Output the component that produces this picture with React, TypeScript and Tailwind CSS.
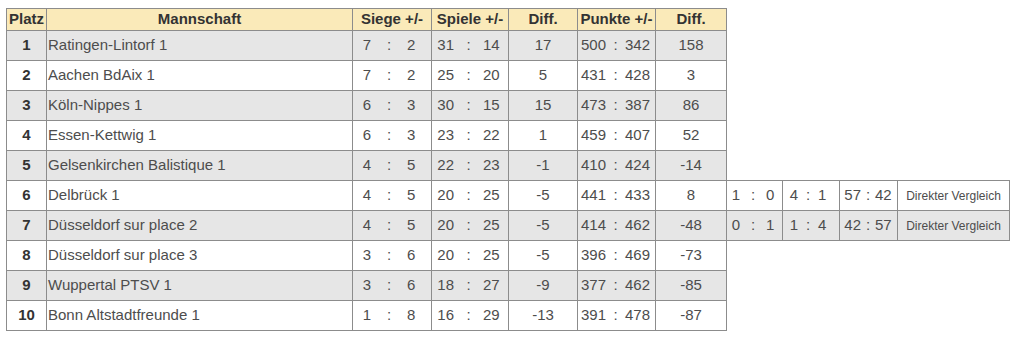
import React from "react";

type Pair = [number, number];

type Row = {
  platz: number;
  team: string;
  siege: Pair;
  spiele: Pair;
  diff: number;
  punkte: Pair;
  pdiff: number;
  extra?: [Pair, Pair, Pair];
};

const rows: Row[] = [
  { platz: 1, team: "Ratingen-Lintorf 1", siege: [7, 2], spiele: [31, 14], diff: 17, punkte: [500, 342], pdiff: 158 },
  { platz: 2, team: "Aachen BdAix 1", siege: [7, 2], spiele: [25, 20], diff: 5, punkte: [431, 428], pdiff: 3 },
  { platz: 3, team: "Köln-Nippes 1", siege: [6, 3], spiele: [30, 15], diff: 15, punkte: [473, 387], pdiff: 86 },
  { platz: 4, team: "Essen-Kettwig 1", siege: [6, 3], spiele: [23, 22], diff: 1, punkte: [459, 407], pdiff: 52 },
  { platz: 5, team: "Gelsenkirchen Balistique 1", siege: [4, 5], spiele: [22, 23], diff: -1, punkte: [410, 424], pdiff: -14 },
  {
    platz: 6, team: "Delbrück 1", siege: [4, 5], spiele: [20, 25], diff: -5, punkte: [441, 433], pdiff: 8,
    extra: [[1, 0], [4, 1], [57, 42]],
  },
  {
    platz: 7, team: "Düsseldorf sur place 2", siege: [4, 5], spiele: [20, 25], diff: -5, punkte: [414, 462], pdiff: -48,
    extra: [[0, 1], [1, 4], [42, 57]],
  },
  { platz: 8, team: "Düsseldorf sur place 3", siege: [3, 6], spiele: [20, 25], diff: -5, punkte: [396, 469], pdiff: -73 },
  { platz: 9, team: "Wuppertal PTSV 1", siege: [3, 6], spiele: [18, 27], diff: -9, punkte: [377, 462], pdiff: -85 },
  { platz: 10, team: "Bonn Altstadtfreunde 1", siege: [1, 8], spiele: [16, 29], diff: -13, punkte: [391, 478], pdiff: -87 },
];

function PairCell({
  value,
  cell,
  left,
  mid,
}: {
  value: Pair;
  cell: string;
  left: string;
  mid: string;
}) {
  return (
    <div className={`flex items-center border-r border-b border-[#8c8c8c] ${cell}`}>
      <span className={`text-right ${left}`}>{value[0]}</span>
      <span className={`text-center ${mid}`}>:</span>
      <span className="flex-1 text-left">{value[1]}</span>
    </div>
  );
}

export default function App() {
  const head = "flex items-center justify-center border-t border-r border-b border-[#8c8c8c] bg-[#faeab9] font-bold text-[#333333]";

  return (
    <main className="min-h-screen bg-white pl-[6px] pt-[8px] font-['Liberation_Sans',Arial,sans-serif] text-[15px] text-[#4d4d4d]">
      <div className="flex h-[23px]">
        <div className={`${head} w-[41px] border-l`}>Platz</div>
        <div className={`${head} w-[306px]`}>Mannschaft</div>
        <div className={`${head} w-[79px]`}>Siege +/-</div>
        <div className={`${head} w-[77px]`}>Spiele +/-</div>
        <div className={`${head} w-[69px]`}>Diff.</div>
        <div className={`${head} w-[78px]`}>Punkte +/-</div>
        <div className={`${head} w-[71px]`}>Diff.</div>
      </div>

      {rows.map((row) => {
        const bg = row.platz % 2 === 1 ? "bg-[#e6e6e6]" : "bg-white";
        const cell = `flex items-center border-r border-b border-[#8c8c8c] ${bg}`;

        return (
          <div key={row.platz} className="flex h-[30px]">
            <div className={`${cell} w-[41px] justify-center border-l font-bold text-[#333333]`}>
              {row.platz}
            </div>
            <div className={`${cell} w-[306px] pl-px`}>{row.team}</div>
            <PairCell value={row.siege} cell={`w-[79px] ${bg}`} left="w-[18px]" mid="w-[36px]" />
            <PairCell value={row.spiele} cell={`w-[77px] ${bg}`} left="w-[22px]" mid="w-[29px]" />
            <div className={`${cell} w-[69px] justify-center`}>{row.diff}</div>
            <PairCell value={row.punkte} cell={`w-[78px] ${bg}`} left="w-[28px]" mid="w-[19px]" />
            <div className={`${cell} w-[71px] justify-center`}>{row.pdiff}</div>

            {row.platz === 5 && <div className="w-[283px] border-b border-[#8c8c8c]" />}

            {row.extra && (
              <>
                <PairCell value={row.extra[0]} cell={`w-[56px] ${bg}`} left="w-[13px]" mid="w-[26px]" />
                <PairCell value={row.extra[1]} cell={`w-[57px] ${bg}`} left="w-[15px]" mid="w-[20px]" />
                <PairCell value={row.extra[2]} cell={`w-[58px] ${bg}`} left="w-[21px]" mid="w-[14px]" />
                <div className={`${cell} w-[112px] justify-center text-[12px]`}>Direkter Vergleich</div>
              </>
            )}
          </div>
        );
      })}
    </main>
  );
}
